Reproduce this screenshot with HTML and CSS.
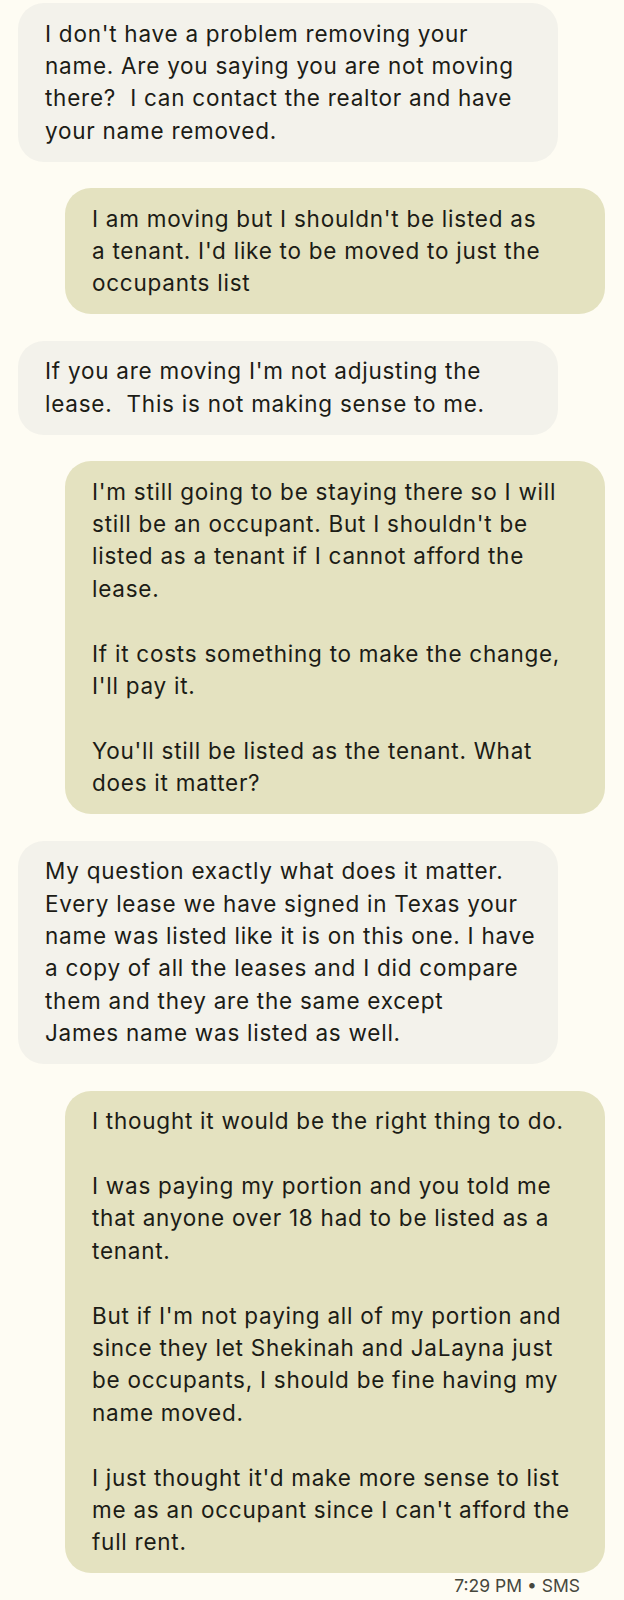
FILE: index.html
```html
<!DOCTYPE html>
<html lang="en">
<head>
<meta charset="UTF-8" />
<meta name="viewport" content="width=device-width, initial-scale=1" />
<title>Messages</title>
<link rel="stylesheet" href="styles.css">
</head>
<body>
<div class="thread">
  <div class="msg incoming">
    <p>I don't have a problem removing your<br>name. Are you saying you are not moving<br>there?&nbsp; I can contact the realtor and have<br>your name removed.</p>
  </div>
  <div class="msg outgoing">
    <p>I am moving but I shouldn't be listed as<br>a tenant. I'd like to be moved to just the<br>occupants list</p>
  </div>
  <div class="msg incoming">
    <p>If you are moving I'm not adjusting the<br>lease.&nbsp; This is not making sense to me.</p>
  </div>
  <div class="msg outgoing">
    <p>I'm still going to be staying there so I will<br>still be an occupant. But I shouldn't be<br>listed as a tenant if I cannot afford the<br>lease.</p>
    <p>If it costs something to make the change,<br>I'll pay it.</p>
    <p>You'll still be listed as the tenant. What<br>does it matter?</p>
  </div>
  <div class="msg incoming">
    <p>My question exactly what does it matter.<br>Every lease we have signed in Texas your<br>name was listed like it is on this one. I have<br>a copy of all the leases and I did compare<br>them and they are the same except<br>James name was listed as well.</p>
  </div>
  <div class="msg outgoing">
    <p>I thought it would be the right thing to do.</p>
    <p>I was paying my portion and you told me<br>that anyone over 18 had to be listed as a<br>tenant.</p>
    <p>But if I'm not paying all of my portion and<br>since they let Shekinah and JaLayna just<br>be occupants, I should be fine having my<br>name moved.</p>
    <p>I just thought it'd make more sense to list<br>me as an occupant since I can't afford the<br>full rent.</p>
  </div>
  <div class="meta">7:29 PM &bull; SMS</div>
</div>
</body>
</html>
```

FILE: styles.css
```css
*, *::before, *::after {
  box-sizing: border-box;
}
body {
  margin: 0;
  background: #fefcf3;
  color: #1c1c16;
  font-family: Inter, Roboto, 'Liberation Sans', sans-serif;
}
.thread {
  display: flex;
  flex-direction: column;
  gap: 26.5px;
  padding: 3px 19px 0 18px;
}
/* bubbles keep the phone's own line breaks */
.msg {
  width: 540px;
  padding: 14.5px 27px;
  border-radius: 26px;
  font-size: 22.5px;
  letter-spacing: 0.75px;
  line-height: 32.4px;
  white-space: nowrap;
}
.msg p {
  margin: 0;
}
.msg p + p {
  margin-top: 32.4px;
}
.incoming {
  align-self: flex-start;
  background: #f3f2eb;
}
.outgoing {
  align-self: flex-end;
  background: #e4e2c0;
}
.meta {
  align-self: flex-end;
  margin-top: -26px;
  padding-right: 25px;
  font-size: 17.5px;
  line-height: 24px;
  color: #46473d;
}
```
